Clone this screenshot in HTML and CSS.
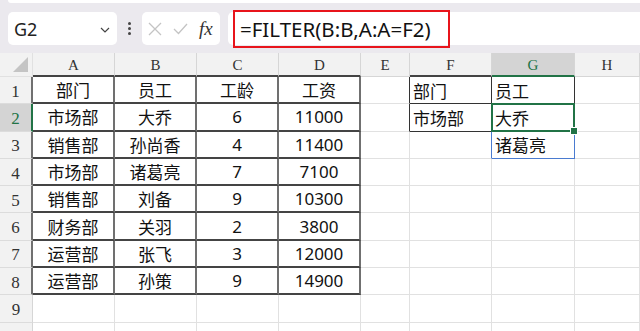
FILE: index.html
```html
<!DOCTYPE html>
<html lang="zh-CN">
<head>
    <meta charset="UTF-8">
    <meta name="viewport" content="width=device-width, initial-scale=1.0">
    <title>FILTER</title>
    <link rel="stylesheet" href="styles.css">
</head>
<body>
    <div class="toolbar">
        <div class="top-strip"></div>
        <div class="bar">
            <div class="name-box">
                <span>G2</span>
                <svg class="chevron" width="10" height="6" viewBox="0 0 10 6"><path d="M1 1 L5 5 L9 1" fill="none" stroke="#444" stroke-width="1.2"/></svg>
            </div>
            <div class="dots"><i></i><i></i><i></i></div>
            <div class="fx-box">
                <svg width="14" height="14" viewBox="0 0 14 14"><path d="M1 1 L13 13 M13 1 L1 13" stroke="#c4c4c4" stroke-width="1.3"/></svg>
                <svg width="15" height="12" viewBox="0 0 15 12"><path d="M1 6 L5.5 10.5 L14 1" fill="none" stroke="#c4c4c4" stroke-width="1.3"/></svg>
                <span class="fx">fx</span>
            </div>
            <div class="formula">
                <span class="mark">=FILTER(B:B,A:A=F2)</span>
            </div>
        </div>
    </div>

    <div class="sheet">
        <!-- header row -->
        <div class="corner"><div class="tri"></div></div>
        <div class="ch tb">A</div>
        <div class="ch tb">B</div>
        <div class="ch tb">C</div>
        <div class="ch tb">D</div>
        <div class="ch">E</div>
        <div class="ch tb">F</div>
        <div class="ch sel">G</div>
        <div class="ch">H</div>

        <!-- 1 -->
        <div class="rh tl">1</div>
        <div class="c t">部门</div>
        <div class="c t">员工</div>
        <div class="c t">工龄</div>
        <div class="c t">工资</div>
        <div class="c ft-l"></div>
        <div class="c l f">部门</div>
        <div class="c l f">员工</div>
        <div class="c"></div>

        <!-- 2 -->
        <div class="rh tl sel">2</div>
        <div class="c t">市场部</div>
        <div class="c t">大乔</div>
        <div class="c t">6</div>
        <div class="c t">11000</div>
        <div class="c ft-l"></div>
        <div class="c l f">市场部</div>
        <div class="c l f active">大乔<span class="handle"></span></div>
        <div class="c"></div>

        <!-- 3 -->
        <div class="rh tl">3</div>
        <div class="c t">销售部</div>
        <div class="c t">孙尚香</div>
        <div class="c t">4</div>
        <div class="c t">11400</div>
        <div class="c"></div>
        <div class="c spill-l"></div>
        <div class="c l spill">诸葛亮</div>
        <div class="c"></div>

        <!-- 4 -->
        <div class="rh tl">4</div>
        <div class="c t">市场部</div>
        <div class="c t">诸葛亮</div>
        <div class="c t">7</div>
        <div class="c t">7100</div>
        <div class="c"></div>
        <div class="c"></div>
        <div class="c"></div>
        <div class="c"></div>

        <!-- 5 -->
        <div class="rh tl">5</div>
        <div class="c t">销售部</div>
        <div class="c t">刘备</div>
        <div class="c t">9</div>
        <div class="c t">10300</div>
        <div class="c"></div>
        <div class="c"></div>
        <div class="c"></div>
        <div class="c"></div>

        <!-- 6 -->
        <div class="rh tl">6</div>
        <div class="c t">财务部</div>
        <div class="c t">关羽</div>
        <div class="c t">2</div>
        <div class="c t">3800</div>
        <div class="c"></div>
        <div class="c"></div>
        <div class="c"></div>
        <div class="c"></div>

        <!-- 7 -->
        <div class="rh tl">7</div>
        <div class="c t">运营部</div>
        <div class="c t">张飞</div>
        <div class="c t">3</div>
        <div class="c t">12000</div>
        <div class="c"></div>
        <div class="c"></div>
        <div class="c"></div>
        <div class="c"></div>

        <!-- 8 -->
        <div class="rh tl">8</div>
        <div class="c t">运营部</div>
        <div class="c t">孙策</div>
        <div class="c t">9</div>
        <div class="c t">14900</div>
        <div class="c"></div>
        <div class="c"></div>
        <div class="c"></div>
        <div class="c"></div>

        <!-- 9 -->
        <div class="rh">9</div>
        <div class="c"></div>
        <div class="c"></div>
        <div class="c"></div>
        <div class="c"></div>
        <div class="c"></div>
        <div class="c"></div>
        <div class="c"></div>
        <div class="c"></div>

        <!-- 10, only its top edge is in view -->
        <div class="rh"></div>
        <div class="c"></div>
        <div class="c"></div>
        <div class="c"></div>
        <div class="c"></div>
        <div class="c"></div>
        <div class="c"></div>
        <div class="c"></div>
        <div class="c"></div>
    </div>
</body>
</html>
```

FILE: styles.css
```css
body {
    margin: 0;
    background-color: #ffffff;
    font-family: "Noto Sans", "Noto Sans CJK SC", sans-serif;
    overflow: hidden;
}
.toolbar {
    background-color: #ebe9ee;
    height: 53px;
}
.top-strip {
    height: 3px;
    margin-left: 8px;
    background-color: #ffffff;
    border-bottom-left-radius: 4px;
}
.bar {
    display: flex;
    align-items: center;
    height: 33px;
    margin-top: 9px;
    padding-left: 8px;
}
.name-box {
    width: 109px;
    height: 33px;
    box-sizing: border-box;
    background-color: #ffffff;
    border-radius: 5px;
    display: flex;
    align-items: center;
    justify-content: space-between;
    padding: 0 7px 0 6px;
    font-size: 18px;
    color: #222;
}
.chevron {
    margin-top: 2px;
}
.dots {
    width: 25px;
    display: flex;
    flex-direction: column;
    align-items: center;
    gap: 2px;
}
.dots i {
    width: 3px;
    height: 3px;
    border-radius: 50%;
    background-color: #444;
}
.fx-box {
    width: 78px;
    height: 33px;
    box-sizing: border-box;
    background-color: #ffffff;
    border-radius: 5px;
    display: flex;
    align-items: center;
    gap: 11px;
    padding-left: 6px;
}
.fx {
    font-family: "Liberation Serif", "DejaVu Serif", serif;
    font-style: italic;
    font-size: 19px;
    color: #333;
    margin-left: 0;
}
.formula {
    flex: 1;
    margin-left: 8px;
    height: 33px;
    background-color: #ffffff;
    border-radius: 5px 0 0 5px;
    display: flex;
    align-items: center;
}
.mark {
    box-sizing: border-box;
    height: 38px;
    width: 217px;
    margin-left: 5px;
    border: 2px solid #e8141b;
    padding-left: 5px;
    display: flex;
    align-items: center;
    font-size: 20.5px;
    color: #111;
}

.sheet {
    display: grid;
    grid-template-columns: 33px 82px 82px 82px 82px 49px 82px 83px 1fr;
    grid-template-rows: 24px repeat(10, 27.3px);
}
.sheet > div {
    box-sizing: border-box;
    border-right: 1px solid #e1e1e1;
    border-bottom: 1px solid #e1e1e1;
    display: flex;
    align-items: center;
    justify-content: center;
}
.corner {
    background-color: #f2f2f2;
    position: relative;
}
.tri {
    position: absolute;
    right: 4px;
    bottom: 4px;
    width: 15px;
    height: 15px;
    background-color: #c4c4c4;
    clip-path: polygon(100% 0, 100% 100%, 0 100%);
}
.sheet > .ch {
    background-color: #f2f2f2;
    border-right-color: #d6d6d6;
    border-bottom-color: #d6d6d6;
    font-family: "Liberation Serif", "DejaVu Serif", serif;
    font-size: 15px;
    color: #333;
    padding-top: 2px;
}
.sheet > .rh {
    background-color: #f2f2f2;
    border-right-color: #d6d6d6;
    border-bottom-color: #dcdcdc;
    font-family: "Liberation Serif", "DejaVu Serif", serif;
    font-size: 17px;
    color: #333;
    padding-top: 3px;
}
.sheet > .ch.tb {
    border-bottom: 2px solid #444;
}
.sheet > .ch.sel {
    background-color: #d4d4d4;
    color: #217346;
    border-bottom: 2px solid #217346;
}
.sheet > .rh.tl {
    border-right: 2px solid #707070;
}
.sheet > .rh.sel {
    background-color: #d4d4d4;
    color: #217346;
    border-right: 2px solid #217346;
}
.c {
    font-size: 17px;
    color: #111;
}
.sheet > .t {
    border-right: 2px solid #707070;
    border-bottom: 2px solid #444;
}
.sheet > .ft-l {
    border-right: 1px solid #333;
}
.sheet > .f {
    border-right: 1px solid #333;
    border-bottom: 1px solid #333;
}
.sheet > .l {
    justify-content: flex-start;
    padding-left: 3px;
}
.sheet > .active {
    position: relative;
}
.active::after {
    content: "";
    position: absolute;
    left: -1px;
    top: -1px;
    right: -1px;
    bottom: -1px;
    border: 2px solid #217346;
}
.handle {
    position: absolute;
    right: -4px;
    bottom: -4px;
    width: 6px;
    height: 6px;
    background-color: #217346;
    border: 1px solid #ffffff;
    z-index: 2;
}
.sheet > .spill-l {
    border-right: 1px solid #4a7bd0;
}
.sheet > .spill {
    border-right: 1px solid #4a7bd0;
    border-bottom: 1px solid #4a7bd0;
}
```
